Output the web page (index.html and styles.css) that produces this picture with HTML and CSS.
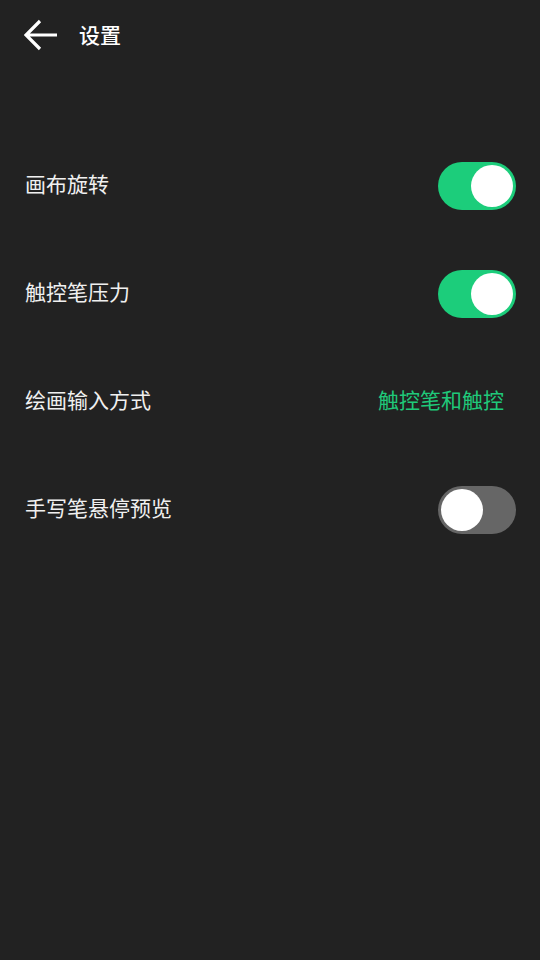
FILE: index.html
```html
<!DOCTYPE html>
<html lang="zh-CN">
<head>
<meta charset="utf-8">
<title>设置</title>
<link rel="stylesheet" href="styles.css">
</head>
<body>
<div class="page">
  <header class="header">
    <svg class="back" width="34" height="32" viewBox="0 0 34 32" aria-hidden="true">
      <path d="M33 16 H3 M16 2 L2 16 L16 30" fill="none" stroke="#fff" stroke-width="3.2" stroke-linecap="butt" stroke-linejoin="miter"/>
    </svg>
    <h1 class="title">设置</h1>
  </header>
  <main class="list">
    <div class="row">
      <span class="label">画布旋转</span>
      <span class="switch on"><span class="knob"></span></span>
    </div>
    <div class="row">
      <span class="label">触控笔压力</span>
      <span class="switch on"><span class="knob"></span></span>
    </div>
    <div class="row">
      <span class="label">绘画输入方式</span>
      <span class="value">触控笔和触控</span>
    </div>
    <div class="row">
      <span class="label">手写笔悬停预览</span>
      <span class="switch off"><span class="knob"></span></span>
    </div>
  </main>
</div>
</body>
</html>
```

FILE: styles.css
```css
html, body {
  margin: 0;
  padding: 0;
  background: #222222;
}
body {
  font-family: "Noto Sans CJK SC", "Noto Sans", sans-serif;
  color: #f2f2f2;
}
.page {
  width: 540px;
  min-height: 960px;
}
.header {
  height: 70px;
  display: flex;
  align-items: center;
  padding-left: 24px;
}
.back {
  display: block;
  margin-right: 21px;
}
.title {
  margin: 0 0 2px 0;
  font-size: 21px;
  font-weight: 500;
  color: #ffffff;
  line-height: 1;
}
.list {
  padding-top: 62px;
}
.row {
  height: 108px;
  display: flex;
  align-items: center;
  justify-content: space-between;
  padding: 0 24px 0 25px;
}
.label {
  font-size: 21px;
  line-height: 1;
  color: #f0f0f0;
  margin-bottom: 5px;
}
.value {
  font-size: 21px;
  line-height: 1;
  color: #1fc97a;
  margin-right: 12px;
  margin-bottom: 5px;
}
.switch {
  width: 78px;
  height: 48px;
  border-radius: 24px;
  display: flex;
  align-items: center;
  padding: 0 3px;
  box-sizing: border-box;
}
.switch.on {
  background: #1ccd7b;
  justify-content: flex-end;
}
.switch.off {
  background: #666666;
  justify-content: flex-start;
}
.knob {
  width: 42px;
  height: 42px;
  border-radius: 50%;
  background: #ffffff;
}
```
